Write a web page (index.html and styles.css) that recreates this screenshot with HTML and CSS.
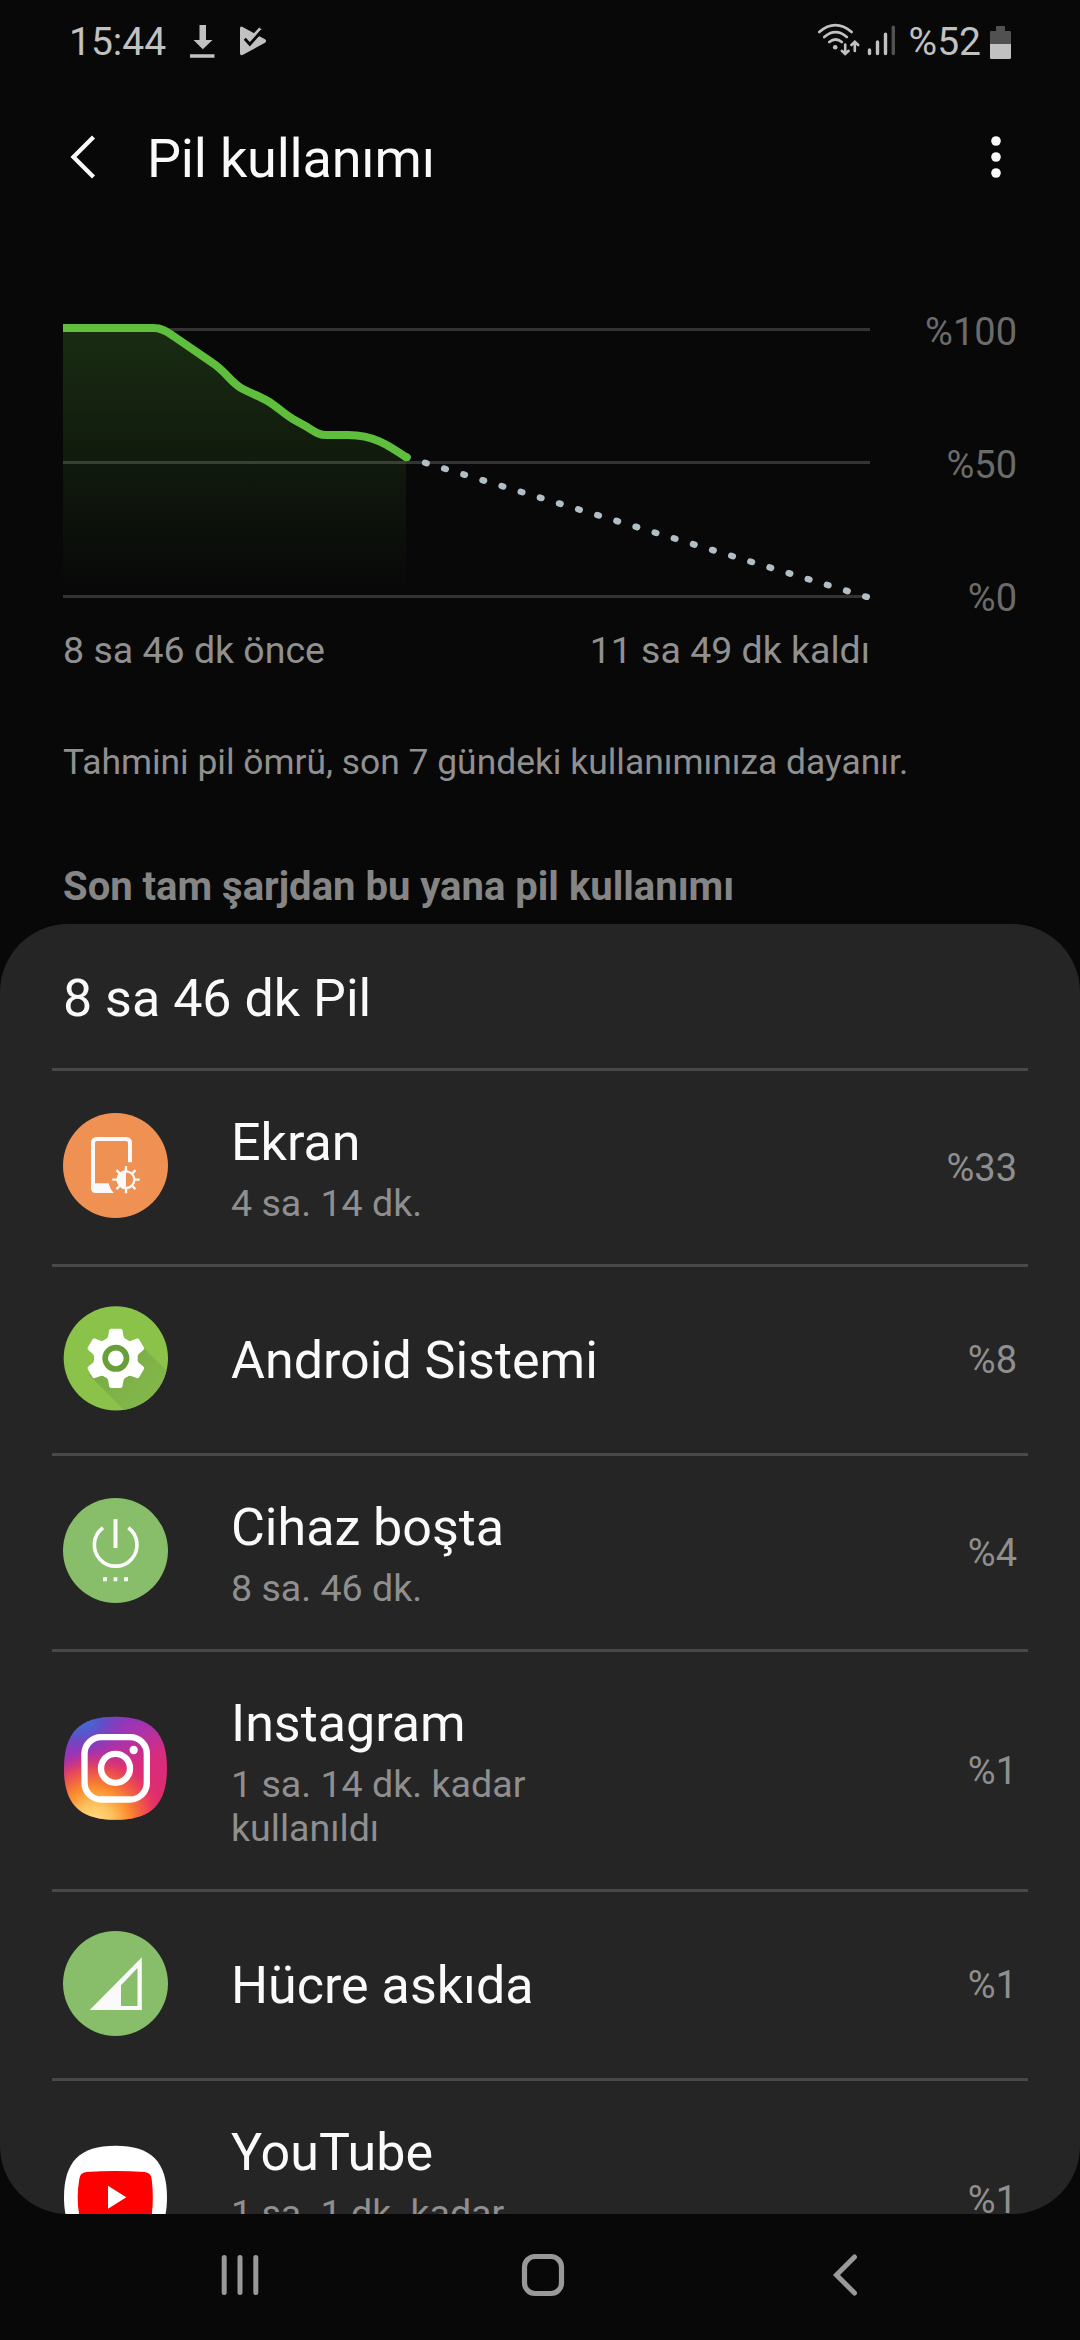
FILE: index.html
```html
<!DOCTYPE html>
<html lang="tr">
<head>
<meta charset="utf-8">
<title>Pil kullanımı</title>
<link rel="stylesheet" href="styles.css">
</head>
<body>
<div class="screen">
  <header class="status">
    <span class="clock">15:44</span>
    <svg class="status-left" width="80" height="40" viewBox="188 20 80 40" fill="#c1c1c1">
      <path d="M199.500 25h6.500v15h6.500l-9.700 9.300-9.300-9.300h6zM190 54.200h24.500v3.600h-24.500z"/>
      <path d="M240 28.500q0-2.800 2.600-1.500L265 39.300q2.200 1.700 0 3.400L243.500 54.600q-3.500 1.900-3.500-1.600z"/>
      <path d="M252 36l8-8.500 2.500 2.500-7 9z"/>
      <path d="M255 34.500l3.500 2.500 5-5.500-3.500-4.500z" fill="#080808"/>
      <path d="M253 36.500l7.300-8" fill="none" stroke="#c1c1c1" stroke-width="3"/>
      <path d="M244.800 38.800l5 5.500 12-13.500" fill="none" stroke="#080808" stroke-width="2.800"/>
    </svg>
    <svg class="status-right" width="80" height="40" viewBox="817 20 80 40" fill="none" stroke="#c1c1c1" stroke-width="2.700" stroke-linecap="round">
      <path d="M819.300 32q16-13.600 32.300 0M824.300 37q11.200-9.600 22.500 0M829.300 42q6.300-5 12.500 0"/>
      <circle cx="835.200" cy="47.300" r="2.300" fill="#c1c1c1" stroke="none"/>
      <path d="M845.200 44.500v9M841.800 50.800l3.400 3.200 3.400-3.200M854.800 51v-9M851.400 45l3.400-3.200 3.400 3.200" stroke-width="2.600"/>
      <path d="M869.500 50v3.500M877.500 42v11.500M885.500 34.200v19.300" stroke-width="3.400"/>
      <path d="M893.300 27.200v26.300" stroke="#515151" stroke-width="3.400"/>
    </svg>
    <span class="level">%52</span>
    <svg width="21" height="34" viewBox="0 0 21 34">
      <path d="M6 1q0-1 1-1h7q1 0 1 1v4h5q1 0 1 1v12H0V6q0-1 1-1h5z" fill="#515151"/>
      <path d="M0 18h21v13.500q0 1.500-1.500 1.500h-18Q0 33 0 31.500z" fill="#c1c1c1"/>
    </svg>
  </header>

  <div class="appbar">
    <svg width="28" height="44" viewBox="0 0 28 44"><path d="M25.500 2L5.500 22l20 20" fill="none" stroke="#fafafa" stroke-width="4.300"/></svg>
    <h1>Pil kullanımı</h1>
    <svg width="10" height="44" viewBox="0 0 10 44" fill="#fafafa"><circle cx="5" cy="6" r="4.800"/><circle cx="5" cy="22" r="4.800"/><circle cx="5" cy="38" r="4.800"/></svg>
  </div>

  <section class="chart">
    <div class="plot">
      <svg width="807" height="300" viewBox="0 0 807 300">
        <defs>
          <linearGradient id="area" x1="0" y1="28" x2="0" y2="290" gradientUnits="userSpaceOnUse">
            <stop offset="0" stop-color="#5fbe3c" stop-opacity=".2"/>
            <stop offset="1" stop-color="#5fbe3c" stop-opacity="0"/>
          </linearGradient>
        </defs>
        <path d="M0 28h807v3H0zM0 161h807v3H0zM0 295h807v3H0z" fill="#333"/>
        <path d="M0 28H90.300C100.300 28 105.300 32.700 110.300 36L148.700 62.300C163.700 71.700 167 82.300 180.300 89.300C192 95.300 200.300 97.300 210.300 104.700C220.300 112 223.700 115.300 230.300 119.300L243.700 126.700C252 131.700 255.300 135 263.700 135H285.300C310.300 135 325.300 145 343 157.500V295H0z" fill="url(#area)"/>
        <path d="M342.900 156.900L805 297.300" stroke="#b0bec5" stroke-width="6.400" stroke-linecap="round" stroke-dasharray="1.700 18.300"/>
        <path d="M0 28H90.300C100.300 28 105.300 32.700 110.300 36L148.700 62.300C163.700 71.700 167 82.300 180.300 89.300C192 95.300 200.300 97.300 210.300 104.700C220.300 112 223.700 115.300 230.300 119.300L243.700 126.700C252 131.700 255.300 135 263.700 135H285.300C310.300 135 325.300 145 343.500 157.500" fill="none" stroke="#5fbe3c" stroke-width="8"/>
        <circle cx="343.500" cy="157.300" r="4" fill="#5fbe3c"/>
      </svg>
      <div class="times"><span>8 sa 46 dk önce</span><span>11 sa 49 dk kaldı</span></div>
    </div>
    <div class="scale"><span>%100</span><span>%50</span><span>%0</span></div>
  </section>

  <p class="note">Tahmini pil ömrü, son 7 gündeki kullanımınıza dayanır.</p>
  <h2>Son tam şarjdan bu yana pil kullanımı</h2>

  <main class="card">
    <div class="card-title">8 sa 46 dk Pil</div>
    <ul>
      <li>
        <svg class="icon" viewBox="0 0 315 315">
          <circle cx="157.500" cy="157.500" r="157.500" fill="#f09154"/>
          <path d="M201 148V90q0-12-12-12H102q-12 0-12 12v130" fill="none" stroke="#fafafa" stroke-width="12"/>
          <path d="M84 211h53q4 17 15 29H98q-14 0-14-14z" fill="#fafafa"/>
          <g transform="translate(189 200)" fill="none" stroke="#fafafa" stroke-width="7">
            <circle r="25"/>
            <path d="M0-28A28 28 0 0 0 0 28z" fill="#fafafa" stroke="none"/>
            <path d="M0-27v-14M0 27v14M-27 0h-14M27 0h14M19-19l9.500-9.500M-19-19l-9.500-9.500M19 19l9.500 9.500M-19 19l-9.500 9.500"/>
          </g>
        </svg>
        <div class="text"><b>Ekran</b><small>4 sa. 14 dk.</small></div>
        <span class="pct">%33</span>
      </li>
      <li class="single">
        <svg class="icon" viewBox="0 0 315 315">
          <defs>
            <clipPath id="disc"><circle cx="158.500" cy="157" r="156.500"/></clipPath>
            <linearGradient id="shade" x1="120" y1="120" x2="270" y2="270" gradientUnits="userSpaceOnUse"><stop offset="0" stop-color="#78a944"/><stop offset="1" stop-color="#83b74a"/></linearGradient>
          </defs>
          <g clip-path="url(#disc)">
            <path d="M0 0h315v315H0z" fill="#8bc34a"/>
            <path d="M78 207l112 112h125V197l-73-71z" fill="url(#shade)"/>
          </g>
          <g transform="translate(158.500 157)">
            <circle r="65" fill="#fff"/>
            <g fill="#fff">
              <path id="tooth" d="M-14-89h28q5 0 6 5l3 18q2 8 12 12L0-40l-35-14q10-4 12-12l3-18q1-5 6-5z"/>
              <use href="#tooth" transform="rotate(60)"/><use href="#tooth" transform="rotate(120)"/><use href="#tooth" transform="rotate(180)"/><use href="#tooth" transform="rotate(240)"/><use href="#tooth" transform="rotate(300)"/>
            </g>
            <circle r="32" fill="#fff" stroke="#689f38" stroke-width="17"/>
          </g>
        </svg>
        <div class="text"><b>Android Sistemi</b></div>
        <span class="pct">%8</span>
      </li>
      <li>
        <svg class="icon" viewBox="0 0 315 315">
          <circle cx="157.500" cy="157.500" r="157.500" fill="#88bd69"/>
          <path d="M120 89A64 64 0 1 0 196 89" fill="none" stroke="#fafafa" stroke-width="11"/>
          <path d="M151.500 63h12v87h-12zM120 238h12v12h-12zM152 238h11v12h-11zM183 238h12v12h-12z" fill="#fafafa"/>
        </svg>
        <div class="text"><b>Cihaz boşta</b><small>8 sa. 46 dk.</small></div>
        <span class="pct">%4</span>
      </li>
      <li>
        <svg class="icon" viewBox="0 0 315 315">
          <defs>
            <linearGradient id="ig-base" x1="60" y1="20" x2="200" y2="300" gradientUnits="userSpaceOnUse"><stop offset="0" stop-color="#7b3abf"/><stop offset=".25" stop-color="#a034b4"/><stop offset=".6" stop-color="#d82c7d"/><stop offset="1" stop-color="#e02c6c"/></linearGradient>
            <radialGradient id="ig-blue" cx="50" cy="5" r="150" gradientUnits="userSpaceOnUse" gradientTransform="scale(1 .8)"><stop offset="0" stop-color="#3a78dc"/><stop offset=".4" stop-color="#4a5fd0" stop-opacity=".8"/><stop offset="1" stop-color="#7b3abf" stop-opacity="0"/></radialGradient>
            <radialGradient id="ig-warm" cx="95" cy="320" r="215" gradientUnits="userSpaceOnUse"><stop offset="0" stop-color="#ffe185"/><stop offset=".25" stop-color="#fdc460"/><stop offset=".5" stop-color="#fb8a2c"/><stop offset=".75" stop-color="#f0504a" stop-opacity=".85"/><stop offset="1" stop-color="#e02c6c" stop-opacity="0"/></radialGradient>
            <path id="squircle" d="M157.500 2C265 2 312 50 312 157S265 311.500 157.500 311.500 3 264 3 157 50 2 157.500 2z"/>
          </defs>
          <use href="#squircle" fill="url(#ig-base)"/>
          <use href="#squircle" fill="url(#ig-blue)"/>
          <use href="#squircle" fill="url(#ig-warm)"/>
          <g fill="none" stroke="#fff" stroke-width="19">
            <rect x="64.500" y="63.500" width="187" height="187" rx="50"/>
            <circle cx="157.500" cy="157" r="43.500"/>
          </g>
          <circle cx="212" cy="102" r="12.500" fill="#fff"/>
        </svg>
        <div class="text"><b>Instagram</b><small>1 sa. 14 dk. kadar kullanıldı</small></div>
        <span class="pct">%1</span>
      </li>
      <li class="single">
        <svg class="icon" viewBox="0 0 315 315">
          <circle cx="157.500" cy="157.500" r="157.500" fill="#88bd69"/>
          <path d="M236.500 79v158H80zM223.500 111L174 163v62h49.500z" fill="#fafafa" fill-rule="evenodd"/>
        </svg>
        <div class="text"><b>Hücre askıda</b></div>
        <span class="pct">%1</span>
      </li>
      <li>
        <svg class="icon" viewBox="0 0 315 315">
          <use href="#squircle" fill="#fff"/>
          <path d="M70 81q87-6 175 0 19 2 21 21 7 55 0 110-2 19-21 21-88 6-175 0-19-2-21-21-10-55 0-110 2-19 21-21z" fill="#f00"/>
          <path d="M135 122l55 34.500-55 34.500z" fill="#fff"/>
        </svg>
        <div class="text"><b>YouTube</b><small>1 sa. 1 dk. kadar kullanıldı</small></div>
        <span class="pct">%1</span>
      </li>
    </ul>
  </main>

  <nav class="navbar">
    <svg width="44" height="44" viewBox="0 0 44 44"><path d="M6.200 4.500v35M22 4.500v35M37.800 4.500v35" stroke="#999" stroke-width="5" stroke-linecap="round"/></svg>
    <svg width="44" height="44" viewBox="0 0 44 44"><rect x="3.500" y="3.500" width="37" height="37" rx="10.500" fill="none" stroke="#999" stroke-width="5.200"/></svg>
    <svg width="44" height="44" viewBox="0 0 44 44"><path d="M31.500 4L13.500 22l18 18" fill="none" stroke="#999" stroke-width="5" stroke-linecap="round"/></svg>
  </nav>
</div>
</body>
</html>
```
FILE: styles.css
```css
* { box-sizing: border-box; margin: 0; padding: 0; }
body { background: #080808; font-family: Roboto, "Noto Sans", sans-serif; }
svg { display: block; flex: none; }

.screen {
  width: 1080px;
  height: 2340px;
  display: flex;
  flex-direction: column;
  background: #080808;
  overflow: hidden;
}

.status {
  height: 85px;
  flex: none;
  display: flex;
  align-items: center;
  padding: 0 69px;
  font-size: 39px;
  line-height: 85px;
  color: #c1c1c1;
}
.clock { width: 119px; }
.status-left, .status-right { margin-top: -5px; }
.status-right { margin-left: auto; }
.level { margin: 0 9px 0 12px; }

.appbar {
  height: 143px;
  flex: none;
  display: flex;
  align-items: center;
  padding: 0 79px 0 68px;
  color: #fafafa;
}
.appbar h1 {
  flex: 1;
  margin: 4px 0 0 51px;
  font-size: 54px;
  letter-spacing: -0.2px;
  font-weight: 400;
  line-height: 64px;
}

.chart {
  flex: none;
  margin-top: 38px;
  padding: 0 63px;
  display: grid;
  grid-template-columns: 807px 1fr;
  font-size: 38px;
}
.plot { padding-top: 34px; }
.times {
  display: flex;
  justify-content: space-between;
  margin-top: 28px;
  font-size: 37.5px;
  line-height: 44px;
  color: #909090;
}
.scale {
  display: flex;
  flex-direction: column;
  text-align: right;
  line-height: 133px;
  color: #6b6b6b;
}

.note {
  margin: 70px 63px 0;
  font-size: 35.4px;
  line-height: 40px;
  color: #909090;
}
h2 {
  margin: 82px 63px 14px;
  font-size: 40px;
  font-weight: 700;
  line-height: 46px;
  color: #858585;
}

.card {
  height: 1290px;
  flex: none;
  border-radius: 68px;
  background: #252525;
  overflow: hidden;
  color: #fafafa;
}
.card-title {
  height: 144px;
  padding: 5px 63px 0;
  font-size: 52px;
  line-height: 139px;
}
ul { list-style: none; }
li {
  margin: 0 52px;
  padding: 41px 11px 39px;
  border-top: 3px solid #484848;
  display: flex;
  align-items: center;
}
li.single { padding: 63px 11px 62px; }
.icon { width: 105px; height: 105px; margin: -26px 63px -20px 0; }
.single .icon { margin-top: -24px; }
.text { flex: 1; }
.text b {
  display: block;
  font-size: 52px;
  font-weight: 400;
  line-height: 61px;
}
.text small {
  display: block;
  width: 400px;
  margin-top: 8px;
  font-size: 37.6px;
  line-height: 44px;
  color: #8f8f8f;
}
.pct { margin-top: -2px; font-size: 38px; line-height: 44px; color: #8f8f8f; }

.navbar {
  height: 126px;
  flex: none;
  display: flex;
  justify-content: space-between;
  align-items: center;
  padding: 0 213px 4px 218px;
}
```
